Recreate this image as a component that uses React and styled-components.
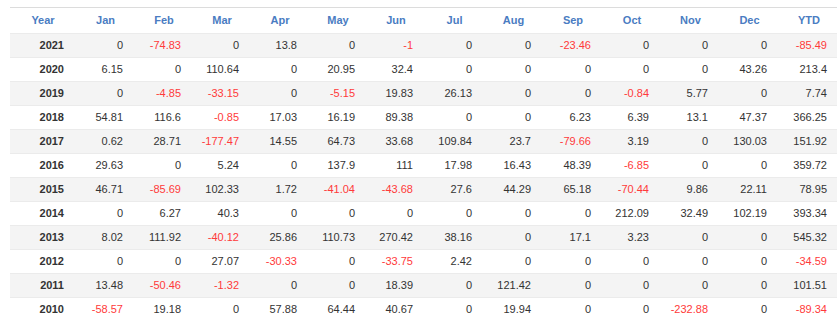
import React from "react";
import styled, { createGlobalStyle } from "styled-components";

const GlobalStyle = createGlobalStyle`
  html, body {
    overflow: hidden;
  }
  body {
    margin: 7px 0 0 10px;
    background: #fff;
    font-family: "Liberation Sans", Arial, sans-serif;
  }
`;

const months = ["Jan", "Feb", "Mar", "Apr", "May", "Jun", "Jul", "Aug", "Sep", "Oct", "Nov", "Dec"];
const colWidths = [66, 59, 58, 58, 58, 58, 58, 59, 59, 60, 58, 59, 59, 60];

const rows = [
  [2021, 0, -74.83, 0, 13.8, 0, -1, 0, 0, -23.46, 0, 0, 0, -85.49],
  [2020, 6.15, 0, 110.64, 0, 20.95, 32.4, 0, 0, 0, 0, 0, 43.26, 213.4],
  [2019, 0, -4.85, -33.15, 0, -5.15, 19.83, 26.13, 0, 0, -0.84, 5.77, 0, 7.74],
  [2018, 54.81, 116.6, -0.85, 17.03, 16.19, 89.38, 0, 0, 6.23, 6.39, 13.1, 47.37, 366.25],
  [2017, 0.62, 28.71, -177.47, 14.55, 64.73, 33.68, 109.84, 23.7, -79.66, 3.19, 0, 130.03, 151.92],
  [2016, 29.63, 0, 5.24, 0, 137.9, 111, 17.98, 16.43, 48.39, -6.85, 0, 0, 359.72],
  [2015, 46.71, -85.69, 102.33, 1.72, -41.04, -43.68, 27.6, 44.29, 65.18, -70.44, 9.86, 22.11, 78.95],
  [2014, 0, 6.27, 40.3, 0, 0, 0, 0, 0, 0, 212.09, 32.49, 102.19, 393.34],
  [2013, 8.02, 111.92, -40.12, 25.86, 110.73, 270.42, 38.16, 0, 17.1, 3.23, 0, 0, 545.32],
  [2012, 0, 0, 27.07, -30.33, 0, -33.75, 2.42, 0, 0, 0, 0, 0, -34.59],
  [2011, 13.48, -50.46, -1.32, 0, 0, 18.39, 0, 121.42, 0, 0, 0, 0, 101.51],
  [2010, -58.57, 19.18, 0, 57.88, 64.44, 40.67, 0, 19.94, 0, 0, -232.88, 0, -89.34],
];

export default function App() {
  return (
    <>
      <GlobalStyle />
      <Table>
        <colgroup>
          {colWidths.map((w, i) => (
            <col key={i} style={{ width: w }} />
          ))}
        </colgroup>
        <thead>
          <tr>
            <Th>Year</Th>
            {months.map((m) => (
              <Th key={m}>{m}</Th>
            ))}
            <Th>YTD</Th>
          </tr>
        </thead>
        <tbody>
          {rows.map(([year, ...vals]) => (
            <Row key={year}>
              <YearCell>{year}</YearCell>
              {vals.map((v, i) => (
                <Cell key={i} $negative={v < 0}>
                  {v}
                </Cell>
              ))}
            </Row>
          ))}
        </tbody>
      </Table>
    </>
  );
}

const Table = styled.table`
  width: 829px;
  table-layout: fixed;
  border-collapse: collapse;
  font-size: 11px;
  line-height: 15px;
  border-top: 1px solid #dcdcdc;
`;

const Th = styled.th`
  padding: 5px 12px 5px 12px;
  text-align: center;
  font-weight: bold;
  color: #4a7cc2;
`;

const Row = styled.tr`
  border-top: 1px solid #ebebeb;
  &:nth-child(odd) {
    background: #f4f4f4;
  }
`;

const Cell = styled.td`
  padding: 4px 12px 4px 0;
  text-align: right;
  white-space: nowrap;
  color: ${(p) => (p.$negative ? "#ff3a3a" : "#333")};
`;

const YearCell = styled(Cell)`
  font-weight: bold;
  color: #333;
`;
